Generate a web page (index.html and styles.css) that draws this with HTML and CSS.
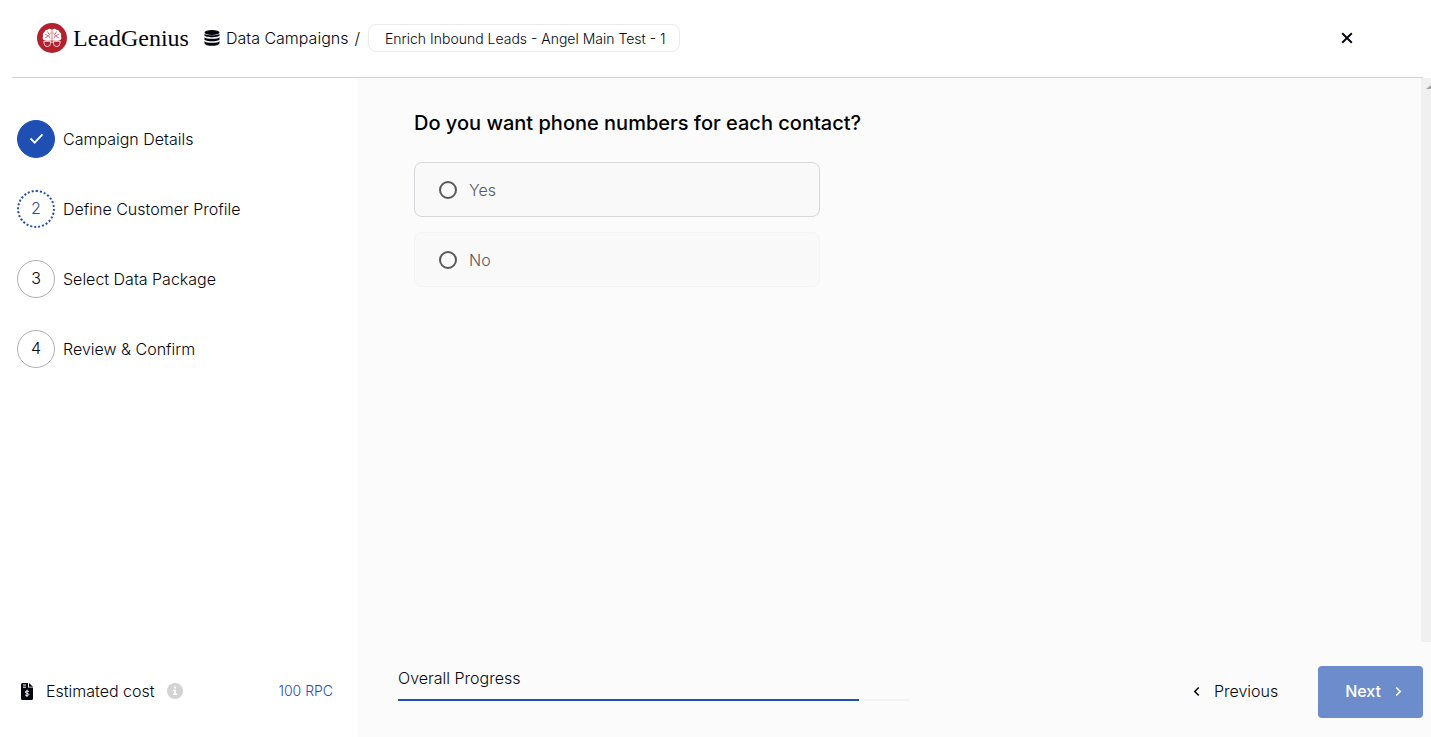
FILE: index.html
```html
<!DOCTYPE html>
<html lang="en">

<head>
    <meta charset="UTF-8">
    <meta name="viewport" content="width=device-width, initial-scale=1.0">
    <title>LeadGenius</title>
    <link rel="stylesheet" href="styles.css">
</head>

<body>
    <header class="header">
        <a class="logo" href="#">
            <svg class="logo-icon" viewBox="0 0 30 30">
                <circle cx="15" cy="15" r="15" fill="#b3202e" />
                <path d="M14.700 6.500c-1-1.200-3.300-1-4 .2-1.900-.2-3.100.9-3.100 2.300-1.700.6-2.300 2.500-1.400 3.900-1.200 1.300-.6 3.900 1.200 4.300 2 .9 5 .8 6 .2.400.3 1 .3 1.300 0zM15.300 6.500c1-1.200 3.300-1 4 .2 1.900-.2 3.100.9 3.100 2.300 1.700.6 2.300 2.500 1.400 3.900 1.200 1.300.6 3.900-1.200 4.300-2 .9-5 .8-6 .2-.4.300-1 .3-1.300 0z" fill="#fff" />
                <path d="M10.500 8.500l1.300 2.500M7.800 11l3.700 2-3.500 2M13.800 9.500l-2 3 1.300 3M19.500 8.500L18.200 11M22.200 11l-3.700 2 3.500 2M16.200 9.500l2 3-1.300 3" fill="none" stroke="#b3202e" stroke-width=".6" />
                <path d="M6.800 18.300h6.700v2a3.200 3.200 0 0 1-6.400 0zM16.500 18.300h6.700l-.3 2a3.200 3.200 0 0 1-6.400 0zM13.500 19.200h3" fill="#b3202e" stroke="#fff" stroke-width=".8" />
            </svg>
            <span>LeadGenius</span>
        </a>
        <nav class="crumbs">
            <svg class="db-icon" viewBox="0 0 16 16">
                <path d="M.5 3.700v1.700c1 2.300 14 2.300 15 0V3.700C14 5.800 2 5.800.5 3.700zM.5 7.200v2.200c1 2.400 14 2.400 15 0V7.200C14 9.400 2 9.400.5 7.200zM.5 11.200v2.100c.5 3.400 14.500 3.400 15 0v-2.100c-1.500 2.200-13.500 2.200-15 0z" />
                <ellipse cx="8" cy="2.500" rx="7.500" ry="2.500" />
            </svg>
            <a href="#">Data Campaigns</a>
            <span>/</span>
        </nav>
        <input class="campaign-name" type="text" aria-label="Campaign name" value="Enrich Inbound Leads - Angel Main Test - 1">
        <button class="close" type="button" aria-label="Close">
            <svg viewBox="0 0 10 10">
                <path d="M1 1l8 8M9 1L1 9" />
            </svg>
        </button>
    </header>

    <div class="page">
        <aside class="sidebar">
            <ol class="steps">
                <li class="step">
                    <span class="circle done">
                        <svg viewBox="0 0 16 12">
                            <path d="M1.500 6l4.500 4.500L14.500 1.500" />
                        </svg>
                    </span>
                    <span>Campaign Details</span>
                </li>
                <li class="step">
                    <span class="circle current">2</span>
                    <span>Define Customer Profile</span>
                </li>
                <li class="step">
                    <span class="circle">3</span>
                    <span>Select Data Package</span>
                </li>
                <li class="step">
                    <span class="circle">4</span>
                    <span>Review &amp; Confirm</span>
                </li>
            </ol>
            <div class="cost">
                <svg class="cost-icon" viewBox="0 0 12 17">
                    <path d="M1.500 0H7v4.500h5v11a1.500 1.500 0 0 1-1.500 1.500h-9A1.500 1.500 0 0 1 0 15.500v-14A1.500 1.500 0 0 1 1.500 0zM8 0l4 3.700H8z" fill="#05060f" />
                    <path d="M2 2h3M2 4.200h3M6 6.800v7.200M8 8.600c-.6-.7-3.700-.9-3.700.5 0 1.500 3.600.9 3.600 2.400 0 1.300-3 1.200-3.800.4" fill="none" stroke="#fff" />
                </svg>
                <span>Estimated cost</span>
                <svg class="info-icon" viewBox="0 0 16 16">
                    <circle cx="8" cy="8" r="8" fill="#d3d3d3" />
                    <path d="M7 3.500h2v2H7zM6 6.700h3v4h1V12H6v-1.300h1V8H6z" fill="#fff" />
                </svg>
                <span class="cost-value">100 RPC</span>
            </div>
        </aside>

        <main class="main">
            <div class="content">
                <form class="question">
                    <h1>Do you want phone numbers for each contact?</h1>
                    <label class="option active">
                        <input type="radio" name="phone" value="yes">
                        <span>Yes</span>
                    </label>
                    <label class="option">
                        <input type="radio" name="phone" value="no">
                        <span>No</span>
                    </label>
                </form>
                <div class="scroll-track">
                    <svg viewBox="0 0 5 4">
                        <path d="M0 4l5-4v4z" />
                    </svg>
                </div>
            </div>

            <footer class="footer">
                <div class="progress">
                    <label for="progress">Overall Progress</label>
                    <progress id="progress" value="90" max="100"></progress>
                </div>
                <div class="actions">
                    <button class="btn prev" type="button">
                        <svg viewBox="0 0 6 8">
                            <path d="M5 .5L1.500 4 5 7.500" />
                        </svg>
                        Previous
                    </button>
                    <button class="btn next" type="button">
                        Next
                        <svg viewBox="0 0 6 8">
                            <path d="M1 .5L4.500 4 1 7.500" />
                        </svg>
                    </button>
                </div>
            </footer>
        </main>
    </div>
</body>

</html>
```

FILE: styles.css
```css
* {
    margin: 0;
    padding: 0;
    box-sizing: border-box;
}

body {
    height: 100vh;
    display: flex;
    flex-direction: column;
    background: #fff;
    color: #05060f;
    font-family: Inter, "Liberation Sans", sans-serif;
    font-size: 16px;
    font-weight: 300;
    line-height: 24px;
    overflow: hidden;
}

a {
    color: inherit;
    text-decoration: none;
}

button {
    font: inherit;
    border: none;
    background: none;
    cursor: pointer;
}

svg {
    display: block;
    flex: none;
}

/* header */

.header {
    display: flex;
    align-items: center;
    margin: 0 8px 0 12px;
    padding: 24px 70px 25px 25px;
    border-bottom: 1px solid #cfd0d2;
}

.logo {
    display: flex;
    align-items: center;
    gap: 6px;
    font-family: "Liberation Serif", serif;
    font-size: 24px;
    font-weight: 400;
}

.logo-icon {
    width: 30px;
    height: 30px;
    margin: -1px 0;
}

.crumbs {
    display: flex;
    align-items: center;
    gap: 6px;
    margin-left: 15px;
}

.db-icon {
    width: 16px;
    height: 16px;
    fill: #05060f;
}

.campaign-name {
    width: 312px;
    height: 28px;
    margin-left: 8px;
    padding: 0 8px 0 16px;
    border: 1px solid #ebebeb;
    border-radius: 8px;
    background: #fff;
    color: inherit;
    font: inherit;
    font-size: 14px;
}

.close {
    margin-left: auto;
}

.close svg {
    width: 12px;
    height: 12px;
    fill: none;
    stroke: #05060f;
    stroke-width: 1.6;
}

/* layout */

.page {
    flex: 1;
    display: flex;
    min-height: 0;
}

.sidebar {
    width: 357px;
    flex: none;
    display: flex;
    flex-direction: column;
    justify-content: space-between;
    padding: 42px 24px 34px 17px;
}

.steps {
    display: flex;
    flex-direction: column;
    gap: 32px;
    list-style: none;
}

.step {
    display: flex;
    align-items: center;
    gap: 8px;
}

.circle {
    width: 38px;
    height: 38px;
    display: flex;
    align-items: center;
    justify-content: center;
    padding-bottom: 2px;
    border: 1px solid #b0b0b0;
    border-radius: 50%;
}

.circle.done {
    border-color: #1f4fb2;
    background: #1f4fb2;
}

.circle.current {
    border: 2px dotted #1f4fb2;
    color: #1f4fb2;
}

.circle svg {
    width: 15px;
    height: 11px;
    fill: none;
    stroke: #fff;
    stroke-width: 2;
}

.cost {
    display: flex;
    align-items: center;
    padding-left: 4px;
}

.cost-icon {
    width: 12px;
    height: 17px;
    margin-right: 13px;
}

.info-icon {
    width: 16px;
    height: 16px;
    margin-left: 12px;
}

.cost-value {
    margin-left: auto;
    color: #1f4fb2;
    font-size: 14px;
}

/* question */

.main {
    flex: 1;
    display: flex;
    flex-direction: column;
    background: #fbfbfb;
}

.content {
    flex: 1;
    display: flex;
    justify-content: space-between;
}

.question {
    display: flex;
    flex-direction: column;
    gap: 15px;
    padding: 33px 0 0 57px;
}

.question h1 {
    margin-bottom: 12px;
    font-size: 20px;
    font-weight: 500;
    color: #000;
}

.option {
    width: 406px;
    height: 55px;
    display: flex;
    align-items: center;
    gap: 12px;
    padding: 0 24px;
    border: 1px solid #f4f4f4;
    border-radius: 8px;
    background: #f9f9f9;
    color: #58595b;
}

.option.active {
    border-color: #d6d7da;
}

.option input {
    appearance: none;
    width: 18px;
    height: 18px;
    border: 2px solid #58595b;
    border-radius: 50%;
}

.option input:checked {
    border-width: 6px;
}

.scroll-track {
    width: 10px;
    padding-top: 7px;
    background: #f0f0f0;
}

.scroll-track svg {
    width: 5px;
    height: 4px;
    margin-left: auto;
    fill: #a3a3a3;
}

/* footer */

.footer {
    display: flex;
    justify-content: space-between;
    padding: 24px 8px 19px 41px;
}

.progress {
    width: 512px;
    display: flex;
    flex-direction: column;
    gap: 9px;
}

.progress progress {
    appearance: none;
    width: 100%;
    height: 2px;
    border: none;
}

.progress progress::-webkit-progress-bar {
    background: #f3f3f3;
}

.progress progress::-webkit-progress-value {
    background: #1f4fb2;
}

.actions {
    display: flex;
    gap: 40px;
}

.btn {
    display: flex;
    align-items: center;
    gap: 14px;
    height: 52px;
    padding-bottom: 2px;
}

.btn svg {
    width: 7px;
    height: 9px;
    fill: none;
    stroke: currentColor;
    stroke-width: 1.4;
}

.prev {
    color: #05060f;
}

.next {
    padding: 0 21px 2px 27px;
    border-radius: 4px;
    background: #6d8ccb;
    color: #fff;
    font-weight: 500;
}
```
